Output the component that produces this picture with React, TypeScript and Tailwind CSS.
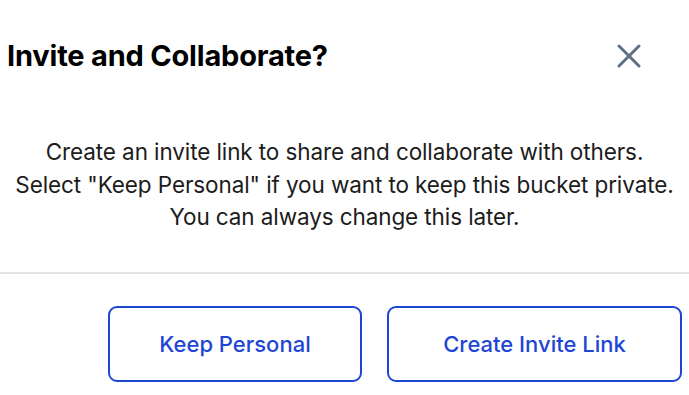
import { X } from 'lucide-react';

export default function App() {
  return (
    <div className="min-h-screen w-full bg-white font-['Inter',sans-serif] text-[#1c1c1c]">
      {/* Header */}
      <div className="flex h-[112px] items-start justify-between pl-[7px] pr-[40px] pt-[37px]">
        <h2 className="text-[29px] font-bold leading-[38px] tracking-[-0.2px] text-black">Invite and Collaborate?</h2>
        <button className="mt-[-1px] text-[#5f6f82]">
          <X className="h-[40px] w-[40px]" strokeWidth={1.8} />
        </button>
      </div>

      {/* Body */}
      <div className="flex h-[160px] flex-col items-center pt-[24px] text-center text-[22.5px] leading-[32.5px] tracking-[-0.1px]">
        <p>Create an invite link to share and collaborate with others.</p>
        <p>Select "Keep Personal" if you want to keep this bucket private.</p>
        <p>You can always change this later.</p>
      </div>

      <div className="h-[2px] w-full bg-[#e2e2e2]" />

      {/* Actions */}
      <div className="flex justify-end gap-[25px] pr-[7px] pt-[32px]">
        <button className="flex h-[76px] w-[254px] items-center justify-center rounded-[9px] border-2 border-[#1e46d4] text-[22px] font-medium text-[#1e46d4]">
          Keep Personal
        </button>
        <button className="flex h-[76px] w-[295px] items-center justify-center rounded-[9px] border-2 border-[#1e46d4] text-[22px] font-medium text-[#1e46d4]">
          Create Invite Link
        </button>
      </div>
    </div>
  );
}
